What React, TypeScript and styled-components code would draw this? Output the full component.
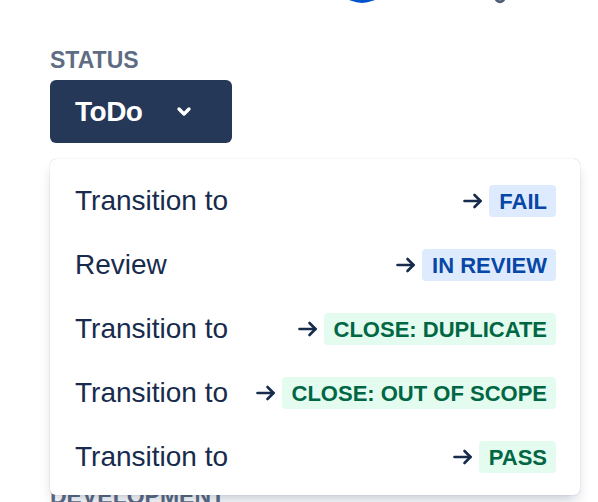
import styled, { createGlobalStyle } from "styled-components";

const transitions = [
  { label: "Transition to", status: "Fail", tone: "blue" },
  { label: "Review", status: "In review", tone: "blue" },
  { label: "Transition to", status: "Close: duplicate", tone: "green" },
  { label: "Transition to", status: "Close: out of scope", tone: "green" },
  { label: "Transition to", status: "Pass", tone: "green" },
];

const tones = {
  blue: { bg: "#deebff", fg: "#0747a6" },
  green: { bg: "#e3fcef", fg: "#006644" },
};

const GlobalStyle = createGlobalStyle`
  html, body {
    margin: 0;
    padding: 0;
    background: #fff;
    font-family: "Liberation Sans", Arial, sans-serif;
    overflow: hidden;
  }
`;

const Page = styled.div`
  position: relative;
  width: 598px;
  height: 502px;
  overflow: hidden;
  padding-left: 50px;
  box-sizing: border-box;
`;

const TopStrip = styled.div`
  height: 6px;
  overflow: hidden;
  display: flex;
  align-items: flex-end;
  margin-left: -50px;
`;

const Avatar = styled.div`
  width: 56px;
  height: 56px;
  flex: none;
  border-radius: 50%;
  background: #0052cc;
  margin-left: 334px;
  margin-bottom: 3px;
`;

const Glyph = styled.svg`
  flex: none;
  margin-left: 104px;
  margin-bottom: 1px;
`;

const FieldLabel = styled.div<{ $top: number }>`
  margin-top: ${(p) => p.$top}px;
  font-size: 23px;
  line-height: 28px;
  font-weight: 700;
  color: #5e6c84;
  text-transform: uppercase;
`;

const StatusButton = styled.button`
  margin-top: 6px;
  width: 182px;
  height: 63px;
  display: flex;
  align-items: center;
  justify-content: space-between;
  padding: 1px 40px 0 25px;
  border: 0;
  border-radius: 6px;
  background: #253858;
  color: #fff;
  font-family: inherit;
  font-size: 28px;
  font-weight: 700;
  letter-spacing: -0.5px;
  box-sizing: border-box;
`;

const Menu = styled.div`
  position: absolute;
  left: 50px;
  top: 159px;
  width: 530px;
  padding: 8px 0;
  background: #fff;
  border-radius: 6px;
  box-shadow: 0 8px 14px -4px rgba(9, 30, 66, 0.25),
    0 0 1px rgba(9, 30, 66, 0.31);
  box-sizing: border-box;
`;

const Row = styled.div`
  height: 64px;
  display: flex;
  align-items: center;
  justify-content: space-between;
  padding: 3px 24px 0 25px;
  color: #172b4d;
  font-size: 28px;
  box-sizing: border-box;
`;

const Target = styled.div`
  display: flex;
  align-items: center;
  gap: 6px;
`;

const Lozenge = styled.span<{ $bg: string; $fg: string }>`
  height: 32px;
  line-height: 33px;
  padding: 0 9px 0 10px;
  border-radius: 4px;
  background: ${(p) => p.$bg};
  color: ${(p) => p.$fg};
  font-size: 22px;
  font-weight: 700;
  text-transform: uppercase;
  white-space: nowrap;
`;

const Chevron = () => (
  <svg width="16" height="12" viewBox="0 0 16 12">
    <polyline
      points="3,3 8,8 13,3"
      fill="none"
      stroke="#fff"
      strokeWidth="3.4"
      strokeLinecap="round"
      strokeLinejoin="round"
    />
  </svg>
);

const Arrow = () => (
  <svg width="20" height="16" viewBox="0 0 20 16">
    <g
      fill="none"
      stroke="#172b4d"
      strokeWidth="2.6"
      strokeLinecap="round"
      strokeLinejoin="round"
    >
      <line x1="1.5" y1="8" x2="17.5" y2="8" />
      <polyline points="11.5,2 17.5,8 11.5,14" />
    </g>
  </svg>
);

const App = () => (
  <>
    <GlobalStyle />
    <Page>
      <TopStrip>
        <Avatar />
        <Glyph width="12" height="14" viewBox="0 0 12 14">
          <circle cx="6" cy="6.5" r="4.2" fill="none" stroke="#505f79" strokeWidth="3" />
        </Glyph>
      </TopStrip>
      <FieldLabel $top={40}>Status</FieldLabel>
      <StatusButton>
        ToDo
        <Chevron />
      </StatusButton>
      <FieldLabel $top={339}>Development</FieldLabel>
      <Menu>
        {transitions.map((t, i) => (
          <Row key={i}>
            <span>{t.label}</span>
            <Target>
              <Arrow />
              <Lozenge
                $bg={tones[t.tone as keyof typeof tones].bg}
                $fg={tones[t.tone as keyof typeof tones].fg}
              >
                {t.status}
              </Lozenge>
            </Target>
          </Row>
        ))}
      </Menu>
    </Page>
  </>
);

export default App;
